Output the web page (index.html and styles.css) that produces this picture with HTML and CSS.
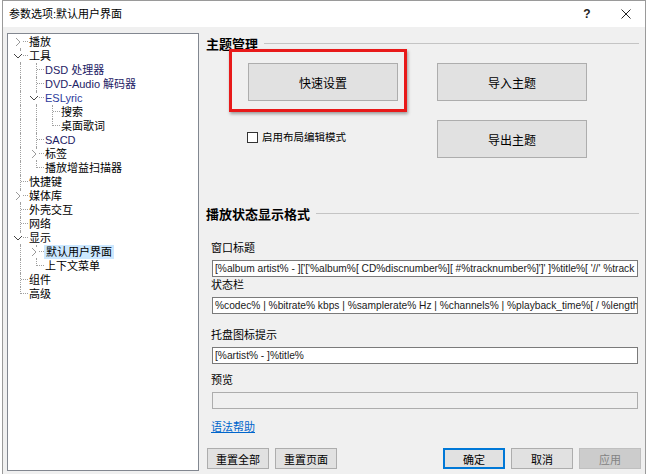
FILE: index.html
```html
<!DOCTYPE html>
<html lang="zh-CN">
<head>
    <meta charset="UTF-8">
    <title>参数选项:默认用户界面</title>
    <link rel="stylesheet" href="styles.css">
</head>
<body>
    <div class="window">
        <div class="titlebar">
            <span class="title">参数选项:默认用户界面</span>
            <span class="tb-btn help">?</span>
            <span class="tb-btn close">
                <svg width="10" height="10" viewBox="0 0 10 10"><path d="M0.5 0.5 L9.5 9.5 M9.5 0.5 L0.5 9.5" stroke="#222" stroke-width="1" fill="none"/></svg>
            </span>
        </div>

        <div class="content">
            <!-- left: page tree -->
            <div class="tree">
                <div class="row">
                    <span class="cell f"><i class="v"></i><i class="h"></i><svg class="chev" width="10" height="10" viewBox="0 0 10 10"><path d="M3 1 L7 5 L3 9" fill="none" stroke="#9a9a9a"/></svg></span>
                    <span class="label">播放</span>
                </div>
                <div class="row">
                    <span class="cell t"><i class="v"></i><i class="h"></i><svg class="chev" width="10" height="10" viewBox="0 0 10 10"><path d="M1 3 L5 7 L9 3" fill="none" stroke="#444"/></svg></span>
                    <span class="label">工具</span>
                </div>
                <div class="row">
                    <span class="cell pass"><i class="v"></i></span>
                    <span class="cell t"><i class="v"></i><i class="h"></i></span>
                    <span class="label comp">DSD 处理器</span>
                </div>
                <div class="row">
                    <span class="cell pass"><i class="v"></i></span>
                    <span class="cell t"><i class="v"></i><i class="h"></i></span>
                    <span class="label comp">DVD-Audio 解码器</span>
                </div>
                <div class="row">
                    <span class="cell pass"><i class="v"></i></span>
                    <span class="cell t"><i class="v"></i><i class="h"></i><svg class="chev" width="10" height="10" viewBox="0 0 10 10"><path d="M1 3 L5 7 L9 3" fill="none" stroke="#444"/></svg></span>
                    <span class="label comp light">ESLyric</span>
                </div>
                <div class="row">
                    <span class="cell pass"><i class="v"></i></span>
                    <span class="cell pass"><i class="v"></i></span>
                    <span class="cell t"><i class="v"></i><i class="h"></i></span>
                    <span class="label">搜索</span>
                </div>
                <div class="row">
                    <span class="cell pass"><i class="v"></i></span>
                    <span class="cell pass"><i class="v"></i></span>
                    <span class="cell l"><i class="v"></i><i class="h"></i></span>
                    <span class="label">桌面歌词</span>
                </div>
                <div class="row">
                    <span class="cell pass"><i class="v"></i></span>
                    <span class="cell t"><i class="v"></i><i class="h"></i></span>
                    <span class="label comp">SACD</span>
                </div>
                <div class="row">
                    <span class="cell pass"><i class="v"></i></span>
                    <span class="cell t"><i class="v"></i><i class="h"></i><svg class="chev" width="10" height="10" viewBox="0 0 10 10"><path d="M3 1 L7 5 L3 9" fill="none" stroke="#9a9a9a"/></svg></span>
                    <span class="label">标签</span>
                </div>
                <div class="row">
                    <span class="cell pass"><i class="v"></i></span>
                    <span class="cell l"><i class="v"></i><i class="h"></i></span>
                    <span class="label">播放增益扫描器</span>
                </div>
                <div class="row">
                    <span class="cell t"><i class="v"></i><i class="h"></i></span>
                    <span class="label">快捷键</span>
                </div>
                <div class="row">
                    <span class="cell t"><i class="v"></i><i class="h"></i><svg class="chev" width="10" height="10" viewBox="0 0 10 10"><path d="M3 1 L7 5 L3 9" fill="none" stroke="#9a9a9a"/></svg></span>
                    <span class="label">媒体库</span>
                </div>
                <div class="row">
                    <span class="cell t"><i class="v"></i><i class="h"></i></span>
                    <span class="label">外壳交互</span>
                </div>
                <div class="row">
                    <span class="cell t"><i class="v"></i><i class="h"></i></span>
                    <span class="label">网络</span>
                </div>
                <div class="row">
                    <span class="cell t"><i class="v"></i><i class="h"></i><svg class="chev" width="10" height="10" viewBox="0 0 10 10"><path d="M1 3 L5 7 L9 3" fill="none" stroke="#444"/></svg></span>
                    <span class="label">显示</span>
                </div>
                <div class="row">
                    <span class="cell pass"><i class="v"></i></span>
                    <span class="cell t"><i class="v"></i><i class="h"></i><svg class="chev" width="10" height="10" viewBox="0 0 10 10"><path d="M3 1 L7 5 L3 9" fill="none" stroke="#9a9a9a"/></svg></span>
                    <span class="label selected">默认用户界面</span>
                </div>
                <div class="row">
                    <span class="cell pass"><i class="v"></i></span>
                    <span class="cell l"><i class="v"></i><i class="h"></i></span>
                    <span class="label">上下文菜单</span>
                </div>
                <div class="row">
                    <span class="cell t"><i class="v"></i><i class="h"></i></span>
                    <span class="label">组件</span>
                </div>
                <div class="row">
                    <span class="cell l"><i class="v"></i><i class="h"></i></span>
                    <span class="label">高级</span>
                </div>
            </div>

            <!-- right: page -->
            <div class="page">
                <div class="group-title">主题管理</div>

                <div class="themes">
                    <div class="theme-btn marked">快速设置</div>
                    <div class="theme-btn">导入主题</div>
                    <label class="check"><span class="box"></span>启用布局编辑模式</label>
                    <div class="theme-btn">导出主题</div>
                </div>

                <div class="group-title big">播放状态显示格式</div>

                <div class="fields">
                    <div class="field f1">
                        <div class="field-label">窗口标题</div>
                        <div class="edit">[%album artist% - ]['['%album%[ CD%discnumber%][ #%tracknumber%]']' ]%title%[ '//' %track artist%]</div>
                    </div>
                    <div class="field f2">
                        <div class="field-label">状态栏</div>
                        <div class="edit">%codec% | %bitrate% kbps | %samplerate% Hz | %channels% | %playback_time%[ / %length%]</div>
                    </div>
                    <div class="field f3">
                        <div class="field-label">托盘图标提示</div>
                        <div class="edit">[%artist% - ]%title%</div>
                    </div>
                    <div class="field f4">
                        <div class="field-label">预览</div>
                        <div class="edit readonly"></div>
                    </div>
                    <a class="help-link" href="#">语法帮助</a>
                </div>

                <div class="actions">
                    <div class="btn-group">
                        <div class="btn">重置全部</div>
                        <div class="btn">重置页面</div>
                    </div>
                    <div class="btn-group">
                        <div class="btn default">确定</div>
                        <div class="btn">取消</div>
                        <div class="btn disabled">应用</div>
                    </div>
                </div>
            </div>
        </div>
    </div>
</body>
</html>
```

FILE: styles.css
```css
* {
    margin: 0;
    padding: 0;
    box-sizing: border-box;
}
body {
    width: 650px;
    height: 474px;
    overflow: hidden;
    background: #fff;
    font-family: "Liberation Sans", "Noto Sans CJK SC", sans-serif;
    font-size: 11px;
    color: #000;
}

/* window frame */
.window {
    margin-left: 2px;
    width: 644px;
    height: 474px;
    border: 1px solid #9a9a9a;
    border-bottom: none;
    background: #f0f0f0;
    display: flex;
    flex-direction: column;
}
.titlebar {
    flex: none;
    height: 26px;
    background: #fff;
    display: flex;
    align-items: center;
    padding-left: 6px;
}
.title {
    font-size: 11px;
    line-height: 14px;
}
.tb-btn {
    display: flex;
    align-items: center;
    justify-content: center;
    height: 26px;
}
.help {
    margin-left: auto;
    width: 40px;
    font-size: 12px;
    font-weight: bold;
    color: #222;
}
.close {
    width: 38px;
}

.content {
    flex: 1;
    display: flex;
    gap: 6px;
    padding: 6px 4px 0 4px;
}

/* tree */
.tree {
    flex: none;
    width: 192px;
    height: 438px;
    background: #fff;
    border: 1px solid #828790;
    padding: 1px 0 0 4px;
}
.row {
    display: flex;
    height: 14px;
    align-items: center;
}
.cell {
    flex: none;
    display: grid;
    width: 16px;
    height: 14px;
}
.cell > * {
    grid-area: 1 / 1;
}
.v {
    justify-self: start;
    width: 9px;
    height: 14px;
    border-right: 1px dotted #a0a0a0;
}
.l .v {
    align-self: start;
    height: 7px;
}
.f .v {
    align-self: end;
    height: 8px;
}
.h {
    justify-self: end;
    align-self: start;
    width: 7px;
    height: 7px;
    border-bottom: 1px dotted #a0a0a0;
}
.chev {
    display: block;
    justify-self: start;
    align-self: center;
    margin-left: 1px;
    width: 10px;
    height: 10px;
    background: #fff;
}
.label {
    margin-left: 0;
    padding: 0 1px;
    line-height: 14px;
    height: 14px;
    white-space: nowrap;
}
.label.comp {
    color: #1e2266;
}
.label.light {
    color: #2b3a9c;
}
.label.selected {
    background: #cce8ff;
    padding: 0 2px;
}

/* page */
.page {
    flex: 1;
    min-width: 0;
    display: flex;
    flex-direction: column;
}
.group-title {
    display: flex;
    align-items: center;
    height: 18px;
    margin: 1px 2px 0 1px;
    font-size: 13px;
    font-weight: bold;
    white-space: nowrap;
}
.group-title::after {
    content: "";
    flex: 1;
    margin-left: 6px;
    border-top: 1px solid #c4c4c4;
}
.group-title.big {
    height: 20px;
    margin-top: 45px;
}

.themes {
    display: grid;
    grid-template-columns: 150px 150px;
    grid-template-rows: 38px 38px;
    column-gap: 39px;
    row-gap: 19px;
    margin: 11px 0 0 43px;
}
.theme-btn {
    display: flex;
    align-items: center;
    justify-content: center;
    background: #e1e1e1;
    border: 1px solid #adadad;
    font-size: 12px;
}
.marked {
    position: relative;
}
.marked::before {
    content: "";
    position: absolute;
    left: -20px;
    top: -15px;
    right: -10px;
    bottom: -12px;
    border: 3px solid #e81a1a;
    box-shadow: 1px 2px 3px rgba(0, 0, 0, 0.35);
}
.check {
    display: flex;
    align-items: flex-start;
    gap: 4px;
    padding-top: 12px;
    margin-left: -1px;
    font-size: 10.5px;
    line-height: 11px;
}
.box {
    width: 11px;
    height: 11px;
    border: 1px solid #333;
    background: #fff;
}

.fields {
    display: flex;
    flex-direction: column;
    min-width: 0;
    padding: 0 3px 0 7px;
}
.field {
    min-width: 0;
}
.field-label {
    height: 16px;
    line-height: 16px;
    margin-left: -1px;
}
.edit {
    margin-top: 4px;
    height: 17px;
    line-height: 15px;
    border: 1px solid #7a7a7a;
    background: #fff;
    padding-left: 2px;
    overflow: hidden;
    white-space: nowrap;
    font-size: 10.2px;
    color: #1a1a1a;
}
.edit.readonly {
    background: #f0f0f0;
    border-color: #adadad;
}
.f1 { margin-top: 17px; }
.f2 { margin-top: 0; }
.f3 { margin-top: 13px; }
.f4 { margin-top: 8px; }
.help-link {
    margin: 10px 0 0 -1px;
    height: 16px;
    line-height: 16px;
    color: #0066cc;
    text-decoration: underline;
    align-self: flex-start;
}

.actions {
    display: flex;
    justify-content: space-between;
    margin-top: 13px;
    padding-left: 2px;
}
.btn-group {
    display: flex;
    gap: 6px;
}
.btn {
    width: 62px;
    height: 21px;
    display: flex;
    align-items: center;
    justify-content: center;
    background: #e1e1e1;
    border: 1px solid #adadad;
}
.btn.default {
    border-color: #0078d7;
    box-shadow: inset 0 0 0 1px #0078d7;
}
.btn.disabled {
    background: #cccccc;
    border-color: #bfbfbf;
    color: #838383;
}
```
